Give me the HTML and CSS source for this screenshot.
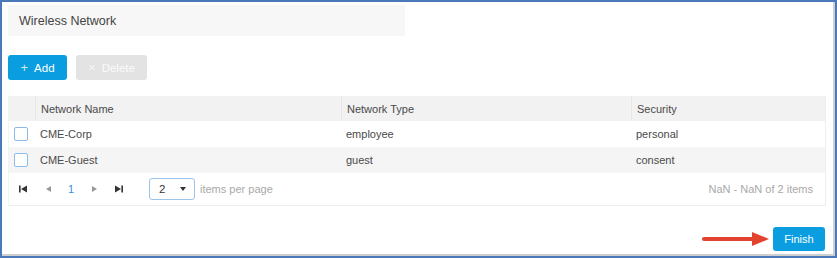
FILE: index.html
```html
<!DOCTYPE html>
<html>
<head>
<meta charset="utf-8">
<link rel="stylesheet" href="styles.css">
</head>
<body>
<div class="frame">
  <div class="title">Wireless Network</div>
  <div class="toolbar">
    <button class="btn btn-primary"><span class="ico">+</span>Add</button>
    <button class="btn btn-disabled"><span class="ico">×</span>Delete</button>
  </div>
  <div class="grid">
    <div class="row head">
      <div class="cell c0"></div>
      <div class="cell c1">Network Name</div>
      <div class="cell c2">Network Type</div>
      <div class="cell c3">Security</div>
    </div>
    <div class="row">
      <div class="cell c0"><span class="chk"></span></div>
      <div class="cell c1">CME-Corp</div>
      <div class="cell c2">employee</div>
      <div class="cell c3">personal</div>
    </div>
    <div class="row alt">
      <div class="cell c0"><span class="chk"></span></div>
      <div class="cell c1">CME-Guest</div>
      <div class="cell c2">guest</div>
      <div class="cell c3">consent</div>
    </div>
    <div class="pager">
      <div class="nav">
        <svg class="pg" width="10" height="10" viewBox="0 0 10 10"><rect x="1" y="1.5" width="1.6" height="7" fill="#333"/><polygon points="9,1.5 9,8.5 3,5" fill="#333"/></svg>
        <svg class="pg" width="10" height="10" viewBox="0 0 10 10"><polygon points="8,2 8,8 3,5" fill="#999"/></svg>
        <span class="page">1</span>
        <svg class="pg" width="10" height="10" viewBox="0 0 10 10"><polygon points="3,2 3,8 8,5" fill="#999"/></svg>
        <svg class="pg" width="10" height="10" viewBox="0 0 10 10"><polygon points="1,1.5 1,8.5 7,5" fill="#333"/><rect x="7.4" y="1.5" width="1.6" height="7" fill="#333"/></svg>
      </div>
      <div class="sel"><span>2</span><svg width="6" height="4" viewBox="0 0 6 4"><polygon points="0,0 6,0 3,4" fill="#333"/></svg></div>
      <span class="ipp">items per page</span>
      <span class="info">NaN - NaN of 2 items</span>
    </div>
  </div>
  <div class="footer">
    <svg class="arrow" width="68" height="14" viewBox="0 0 68 14"><rect x="0" y="5" width="54" height="4" rx="2" fill="#e2422e"/><polygon points="50,0 67,7 50,14" fill="#e2422e"/></svg>
    <button class="btn btn-primary finish">Finish</button>
  </div>
</div>
</body>
</html>
```

FILE: styles.css
```css
* { box-sizing: border-box; }
html, body { margin: 0; padding: 0; background: #fff; }
body {
  font-family: "Liberation Sans", Arial, sans-serif;
  color: #4a4a4a;
  font-size: 11px;
}
.frame {
  width: 837px;
  height: 258px;
  border: 2px solid #4a78b8;
  box-shadow: inset -2px -2px 0 #cfcfcf;
  padding: 3px 9px 0 6px;
  display: flex;
  flex-direction: column;
}
.title {
  width: 397px;
  height: 31px;
  background: #f7f7f7;
  font-size: 12.5px;
  color: #444;
  padding-left: 11px;
  display: flex;
  align-items: center;
}
.toolbar {
  margin-top: 19px;
  display: flex;
  gap: 9px;
}
.btn {
  font-family: inherit;
  border: none;
  border-radius: 3px;
  height: 25px;
  font-size: 11.5px;
  color: #fff;
  padding: 0;
  display: flex;
  align-items: center;
  justify-content: center;
}
.btn-primary { background: #0a9ee0; }
.btn-disabled { background: #e3e3e3; color: #fafafa; }
.toolbar .btn-primary { width: 59px; }
.toolbar .btn-disabled { width: 71px; }
.ico { font-size: 13px; margin-right: 6px; opacity: 0.8; }
.grid {
  margin-top: 16px;
  width: 818px;
  border-bottom: 1px solid #eee;
  border-left: 1px solid #f3f3f3;
  border-right: 1px solid #eee;
}
.row {
  display: flex;
  height: 26px;
}
.row.head { background: #f2f2f2; height: 25px; }
.row.alt { background: #f5f5f5; }
.cell {
  display: flex;
  align-items: center;
  padding-left: 5px;
  color: #4a4a4a;
}
.head .cell { border-left: 1px solid #e6e6e6; }
.head .cell.c0 { border-left: none; }
.c0 { width: 26px; padding-left: 5px; }
.c1 { width: 306px; }
.c2 { width: 290px; }
.c3 { flex: 1; }
.chk {
  width: 14px;
  height: 14px;
  border: 1.5px solid #8bbbe8;
  border-radius: 2px;
  background: #fff;
}
.pager {
  height: 32px;
  display: flex;
  align-items: center;
  padding-left: 9px;
  padding-right: 12px;
}
.nav {
  display: flex;
  align-items: center;
  gap: 15px;
  width: 131px;
}
.page { color: #3b8fd9; font-size: 11px; }
.sel {
  width: 46px;
  height: 22px;
  border: 1px solid #9cc3ea;
  border-radius: 3px;
  display: flex;
  align-items: center;
  justify-content: space-between;
  padding: 0 8px 0 9px;
  color: #333;
  font-size: 11.5px;
}
.ipp { color: #a8a8a8; margin-left: 5px; }
.info { margin-left: auto; color: #a8a8a8; }
.footer {
  margin-top: 21px;
  display: flex;
  justify-content: flex-end;
  align-items: center;
  gap: 3px;
  padding-right: 1px;
}
.finish { width: 52px; height: 24px; font-size: 11px; }
```
